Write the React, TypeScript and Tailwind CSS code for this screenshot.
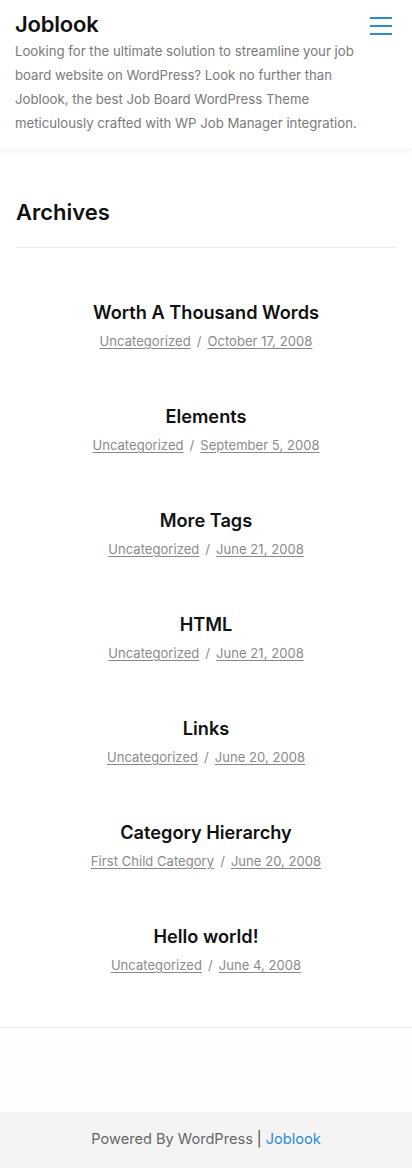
const posts = [
  { title: 'Worth A Thousand Words', cat: 'Uncategorized', date: 'October 17, 2008' },
  { title: 'Elements', cat: 'Uncategorized', date: 'September 5, 2008' },
  { title: 'More Tags', cat: 'Uncategorized', date: 'June 21, 2008' },
  { title: 'HTML', cat: 'Uncategorized', date: 'June 21, 2008' },
  { title: 'Links', cat: 'Uncategorized', date: 'June 20, 2008' },
  { title: 'Category Hierarchy', cat: 'First Child Category', date: 'June 20, 2008' },
  { title: 'Hello world!', cat: 'Uncategorized', date: 'June 4, 2008' },
];

export default function App() {
  return (
    <div className="min-h-[1168px] bg-white font-['Inter',sans-serif] flex flex-col">
      {/* Header */}
      <header className="px-[15px] pt-[10px] pb-[14px] shadow-[0_2px_4px_rgba(0,0,0,0.03)] border-b border-[#f6f6f6]">
        <div className="flex items-start justify-between">
          <a className="text-[22px] font-semibold leading-[28px] text-[#111] tracking-[-0.2px]">Joblook</a>
          <button className="mt-[7px] mr-[5px] flex flex-col gap-[6px] w-[22px]">
            <span className="block h-[2px] w-[22px] bg-[#2b8cd0]" />
            <span className="block h-[2px] w-[22px] bg-[#2b8cd0]" />
            <span className="block h-[2px] w-[22px] bg-[#2b8cd0]" />
          </button>
        </div>
        <p className="mt-[1px] text-[13.2px] leading-[24px] text-[#7a7a7a] tracking-[0px] pr-[20px]">
          Looking for the ultimate solution to streamline your job board website on WordPress? Look no further than Joblook, the best Job Board WordPress Theme meticulously crafted with WP Job Manager integration.
        </p>
      </header>

      {/* Main */}
      <main className="px-4 pt-[48px] pb-[52px] border-b border-[#eee]">
        <h1 className="text-[22px] font-semibold leading-[28px] text-[#111] pb-[21px] border-b border-[#eee]">Archives</h1>
        <div className="pt-[53px] flex flex-col gap-[54px]">
          {posts.map((p) => (
            <article key={p.title} className="text-center">
              <h2 className="text-[18.2px] font-semibold leading-[22px] text-[#111]">{p.title}</h2>
              <div className="mt-[8px] text-[13px] leading-[20px] text-[#8a8a8a] tracking-[0.05px]">
                <a className="underline underline-offset-2">{p.cat}</a>
                <span className="mx-[6px]">/</span>
                <a className="underline underline-offset-2">{p.date}</a>
              </div>
            </article>
          ))}
        </div>
      </main>

      <div className="flex-1 bg-[#fdfdfd] min-h-[83px]" />

      {/* Footer */}
      <footer className="bg-[#f4f4f4] h-[56px] flex items-center justify-center text-[14.6px] text-[#666]">
        <span>Powered By WordPress</span>
        <span className="mx-[4px] text-[#444]">|</span>
        <a className="text-[#2b8cd0]">Joblook</a>
      </footer>
    </div>
  );
}
